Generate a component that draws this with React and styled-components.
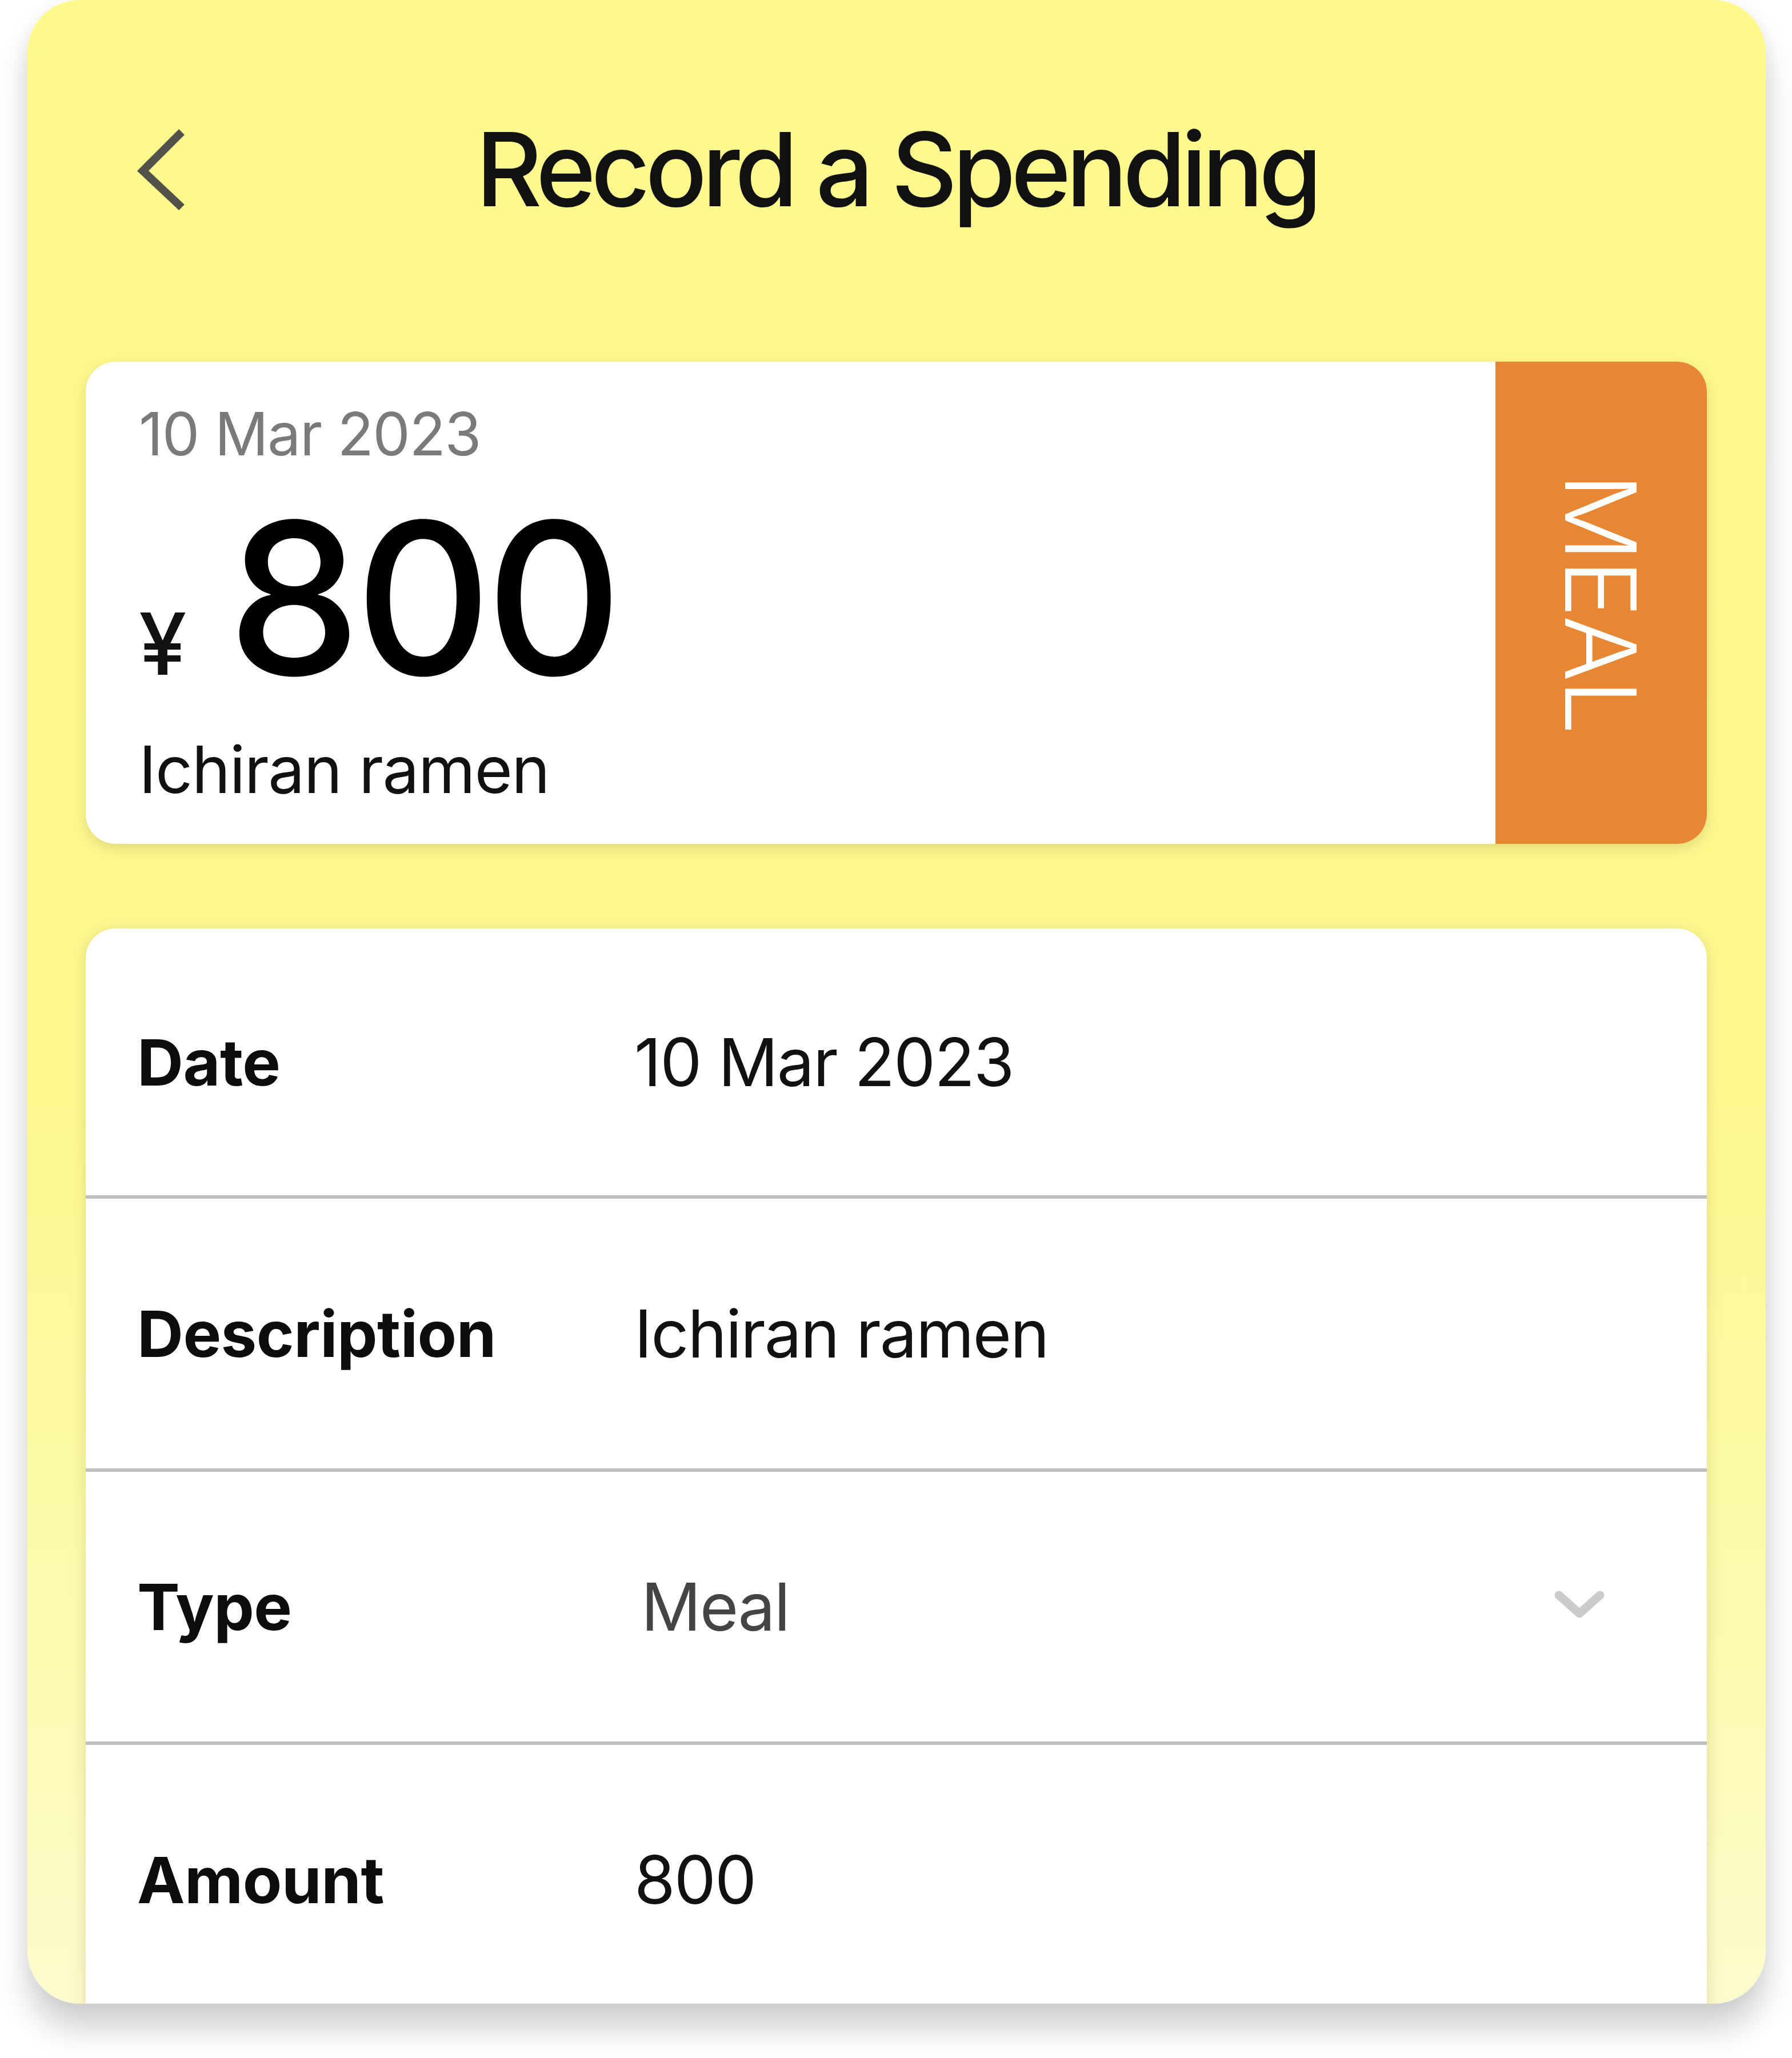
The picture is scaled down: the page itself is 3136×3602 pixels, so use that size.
import React from 'react';
import styled, { createGlobalStyle } from 'styled-components';

const GlobalStyle = createGlobalStyle`
	html, body {
		margin: 0;
		padding: 0;
		background: #ffffff;
	}
	body {
		font-family: Inter, "Liberation Sans", Arial, sans-serif;
		color: #111;
	}
`;

const Page = styled.div`
	padding: 0 46px 95px 48px;
	min-height: 3602px;
	box-sizing: border-box;
`;

const Screen = styled.div`
	width: 3042px;
	height: 3507px;
	border-radius: 92px;
	overflow: hidden;
	background: linear-gradient(180deg, #fef98d 0%, #fdf98f 55%, #fcfab4 85%, #fcfbcd 100%);
	box-shadow: 0 45px 55px rgba(0, 0, 0, 0.18), 0 0 30px rgba(0, 0, 0, 0.05);
	display: flex;
	flex-direction: column;
`;

const Header = styled.header`
	height: 592px;
	display: grid;
	grid-template-columns: 1fr auto 1fr;
	align-items: center;
	flex-shrink: 0;
`;

const BackButton = styled.button`
	justify-self: start;
	margin-left: 190px;
	padding: 0;
	border: none;
	background: none;
	display: flex;
	cursor: pointer;
`;

const Title = styled.h1`
	margin: 0;
	font-size: 179px;
	font-weight: 500;
	letter-spacing: -8.5px;
	line-height: 1;
	color: #111;
`;

const Body = styled.main`
	padding: 41px 103px 0 102px;
	display: flex;
	flex-direction: column;
	gap: 148px;
`;

const SummaryCard = styled.section`
	height: 844px;
	display: flex;
	background: #fff;
	border-radius: 52px;
	overflow: hidden;
	box-shadow: 0 8px 24px rgba(90, 80, 0, 0.18);
`;

const SummaryMain = styled.div`
	flex: 1;
	padding: 74px 0 0 93px;
	display: flex;
	flex-direction: column;
`;

const SummaryDate = styled.div`
	font-size: 104px;
	letter-spacing: -1.5px;
	line-height: 1;
	color: #7a7a7a;
`;

const AmountLine = styled.div`
	margin-top: 51px;
	display: flex;
	align-items: baseline;
	gap: 72px;
	line-height: 1;
`;

const Currency = styled.span`
	font-size: 150px;
	font-weight: 500;
`;

const BigAmount = styled.span`
	font-size: 370px;
	font-weight: 500;
	letter-spacing: -10px;
	color: #000;
`;

const SummaryDesc = styled.div`
	margin-top: 58px;
	font-size: 114px;
	letter-spacing: -1.5px;
	line-height: 1;
	color: #111;
`;

const TypeTab = styled.div`
	width: 370px;
	background: ${p => p.$color};
	display: flex;
	align-items: center;
	justify-content: center;
`;

const TypeTabText = styled.span`
	writing-mode: vertical-rl;
	font-size: 172px;
	font-weight: 300;
	letter-spacing: -4px;
	line-height: 1;
	color: #fff;
`;

const DetailsCard = styled.section`
	background: #fff;
	border-radius: 52px 52px 0 0;
	box-shadow: 0 4px 24px rgba(90, 80, 0, 0.18);
	min-height: 1900px;
`;

const Row = styled.div`
	height: 472px;
	display: grid;
	grid-template-columns: 870px 1fr auto;
	align-items: center;
	padding: 0 177px 0 90px;
	border-bottom: ${p => (p.$last ? 'none' : '6px solid #bfbfbf')};

	&:first-child {
		height: 467px;
	}
`;

const Label = styled.div`
	font-size: 112px;
	font-weight: 700;
	letter-spacing: -0.5px;
	color: #0d0d0d;
`;

const Value = styled.div`
	font-size: 116px;
	font-weight: 400;
	letter-spacing: -2px;
	color: ${p => (p.$select ? '#444' : '#111')};
	padding-left: ${p => (p.$select ? '12px' : '0')};
`;

const BackIcon = () => (
	<svg width="90" height="150" viewBox="0 0 90 150">
		<path d="M80 10 L12 78 L80 142" fill="none" stroke="#53524a" strokeWidth="14" strokeLinejoin="miter" />
	</svg>
);

const ChevronDown = () => (
	<svg width="90" height="56" viewBox="0 0 90 56">
		<path d="M8 8 L44 40 L80 8" fill="none" stroke="#cbcbcb" strokeWidth="15" strokeLinecap="round" strokeLinejoin="round" />
	</svg>
);

const spending = {
	date: '10 Mar 2023',
	amount: 800,
	description: 'Ichiran ramen',
	type: 'Meal',
};

const App = () => {
	return (
		<Page>
			<GlobalStyle />
			<Screen>
				<Header>
					<BackButton aria-label="Back">
						<BackIcon />
					</BackButton>
					<Title>Record a Spending</Title>
					<div />
				</Header>
				<Body>
					<SummaryCard>
						<SummaryMain>
							<SummaryDate>{spending.date}</SummaryDate>
							<AmountLine>
								<Currency>¥</Currency>
								<BigAmount>{spending.amount}</BigAmount>
							</AmountLine>
							<SummaryDesc>{spending.description}</SummaryDesc>
						</SummaryMain>
						<TypeTab $color="#e78633">
							<TypeTabText>{spending.type.toUpperCase()}</TypeTabText>
						</TypeTab>
					</SummaryCard>
					<DetailsCard>
						<Row>
							<Label>Date</Label>
							<Value>{spending.date}</Value>
						</Row>
						<Row>
							<Label>Description</Label>
							<Value>{spending.description}</Value>
						</Row>
						<Row>
							<Label>Type</Label>
							<Value $select>{spending.type}</Value>
							<ChevronDown />
						</Row>
						<Row $last>
							<Label>Amount</Label>
							<Value>{spending.amount}</Value>
						</Row>
					</DetailsCard>
				</Body>
			</Screen>
		</Page>
	);
};

export default App;
